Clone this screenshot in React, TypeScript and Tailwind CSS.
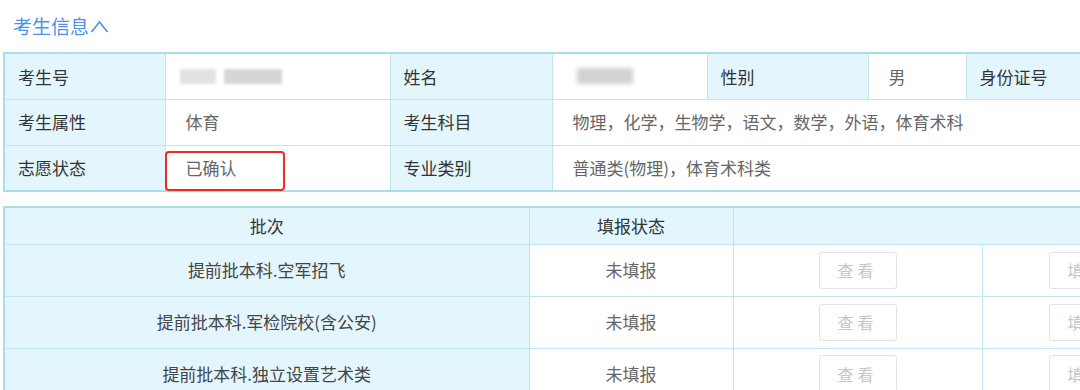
import React from "react";

const font = { fontFamily: '"Noto Sans CJK SC", "Noto Sans", sans-serif' };

const lbl = "border border-[#bfe4f2] bg-[#e4f6fd] text-[#333] pl-[13px] text-left font-normal";
const val = "border border-[#bfe4f2] bg-white text-[#666] pl-[20px] text-left";

function Btn({ text }: { text: string }) {
  return (
    <div className="mx-auto flex h-[37px] w-[78px] items-center justify-center rounded-[3px] border border-[#dfe3e8] bg-white text-[16px] tracking-[4px] text-[#c3c6cc]">
      {text}
    </div>
  );
}

export default function App() {
  const rows = ["提前批本科.空军招飞", "提前批本科.军检院校(含公安)", "提前批本科.独立设置艺术类"];
  return (
    <div className="h-[390px] w-[1080px] overflow-hidden bg-white pl-[3px]" style={font}>
      <div className="flex h-[52px] items-center pl-[10px] text-[19px] text-[#5090ec]">
        <span>考生信息</span>
        <svg width="19" height="13" viewBox="0 0 19 13" className="ml-[1px] mt-[1px]">
          <path d="M1.5 12 L9.5 2 L17.5 12" fill="none" stroke="#5090ec" strokeWidth="1.7" />
        </svg>
      </div>

      <table className="table-fixed border-collapse border-2 border-[#a9dfe9] text-[17px]" style={{ width: 1160 }}>
        <colgroup>
          <col style={{ width: 161 }} />
          <col style={{ width: 225 }} />
          <col style={{ width: 162 }} />
          <col style={{ width: 155 }} />
          <col style={{ width: 161 }} />
          <col style={{ width: 98 }} />
          <col style={{ width: 198 }} />
        </colgroup>
        <tbody>
          <tr className="h-[46px]">
            <td className={lbl}>考生号</td>
            <td className={val}>
              <div className="flex items-center gap-[8px]">
                <div className="-ml-[6px] h-[15px] w-[36px] bg-[#e2e2e2] blur-[1.5px]" />
                <div className="h-[15px] w-[58px] bg-[#d6d6d6] blur-[1.5px]" />
              </div>
            </td>
            <td className={lbl}>姓名</td>
            <td className={val}>
              <div className="ml-[4px] h-[16px] w-[56px] bg-[#d2d2d2] blur-[2px]" />
            </td>
            <td className={lbl}>性别</td>
            <td className={val}>男</td>
            <td className={lbl}>身份证号</td>
          </tr>
          <tr className="h-[46px]">
            <td className={lbl}>考生属性</td>
            <td className={val}>体育</td>
            <td className={lbl}>考生科目</td>
            <td className={val} colSpan={4}>物理，化学，生物学，语文，数学，外语，体育术科</td>
          </tr>
          <tr className="h-[46px]">
            <td className={lbl}>志愿状态</td>
            <td className={val + " relative"}>
              已确认
              <div className="absolute -left-[1px] top-[5px] h-[40px] w-[120px] rounded-[4px] border-[2.5px] border-[#ee2a22]" />
            </td>
            <td className={lbl}>专业类别</td>
            <td className={val} colSpan={4}>普通类(物理)，体育术科类</td>
          </tr>
        </tbody>
      </table>

      <table className="mt-[14px] table-fixed border-collapse border-2 border-[#a9dfe9] text-[17px]" style={{ width: 1160 }}>
        <colgroup>
          <col style={{ width: 525 }} />
          <col style={{ width: 204 }} />
          <col style={{ width: 249 }} />
          <col style={{ width: 182 }} />
        </colgroup>
        <tbody>
          <tr className="h-[37px] bg-[#e4f6fd] text-[#333]">
            <td className="border border-[#bfe4f2] text-center">批次</td>
            <td className="border border-[#bfe4f2] text-center">填报状态</td>
            <td className="border border-[#bfe4f2]" colSpan={2}></td>
          </tr>
          {rows.map((r) => (
            <tr key={r} className="h-[52px]">
              <td className="border border-[#bfe4f2] bg-[#e4f6fd] text-center text-[#444]">{r}</td>
              <td className="border border-[#bfe4f2] bg-white text-center text-[#666]">未填报</td>
              <td className="border border-[#bfe4f2] bg-white">
                <Btn text="查看" />
              </td>
              <td className="border border-[#bfe4f2] bg-white pl-[66px]">
                <div className="flex h-[37px] w-[78px] items-center justify-center rounded-[3px] border border-[#dfe3e8] bg-white text-[16px] tracking-[4px] text-[#c3c6cc]">
                  填报
                </div>
              </td>
            </tr>
          ))}
        </tbody>
      </table>
    </div>
  );
}
